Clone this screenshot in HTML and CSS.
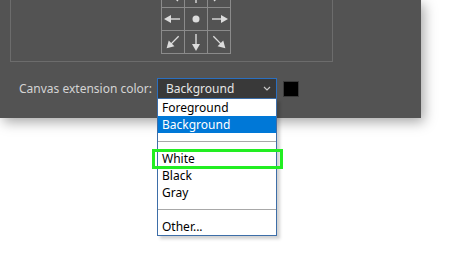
FILE: index.html
```
<!DOCTYPE html>
<html lang="en">
<head>
    <meta charset="UTF-8">
    <title>Canvas Size</title>
    <link rel="stylesheet" href="styles.css">
</head>
<body>
    <div class="dialog">
        <div class="anchor-box">
            <div class="anchor-grid">
                <div class="cell"><svg class="arrow r-135" viewBox="0 0 22 22"><path d="M4 11H14"/><polygon points="13,7 20,11 13,15"/></svg></div>
                <div class="cell"><svg class="arrow r-90" viewBox="0 0 22 22"><path d="M4 11H14"/><polygon points="13,7 20,11 13,15"/></svg></div>
                <div class="cell"><svg class="arrow r-45" viewBox="0 0 22 22"><path d="M4 11H14"/><polygon points="13,7 20,11 13,15"/></svg></div>
                <div class="cell"><svg class="arrow r180" viewBox="0 0 22 22"><path d="M4 11H14"/><polygon points="13,7 20,11 13,15"/></svg></div>
                <div class="cell"><svg class="arrow" viewBox="0 0 22 22"><circle cx="11" cy="11" r="3.5"/></svg></div>
                <div class="cell"><svg class="arrow" viewBox="0 0 22 22"><path d="M4 11H14"/><polygon points="13,7 20,11 13,15"/></svg></div>
                <div class="cell"><svg class="arrow r135" viewBox="0 0 22 22"><path d="M3 11H14"/><polygon points="13,7 20,11 13,15"/></svg></div>
                <div class="cell"><svg class="arrow r90" viewBox="0 0 22 22"><path d="M3 11H14"/><polygon points="13,7 20,11 13,15"/></svg></div>
                <div class="cell"><svg class="arrow r45" viewBox="0 0 22 22"><path d="M3 11H14"/><polygon points="13,7 20,11 13,15"/></svg></div>
            </div>
        </div>

        <div class="ext-row">
            <label class="ext-label">Canvas extension color:</label>
            <div class="select-wrap">
                <div class="select">
                    <span>Background</span>
                    <svg class="chevron" viewBox="0 0 8 5"><path d="M1 1L4 4L7 1"/></svg>
                </div>
                <ul class="options">
                    <li>Foreground</li>
                    <li class="selected">Background</li>
                    <li class="sep"></li>
                    <li>White</li>
                    <li>Black</li>
                    <li>Gray</li>
                    <li class="sep"></li>
                    <li>Other...</li>
                </ul>
                <div class="highlight"></div>
            </div>
            <div class="swatch"></div>
        </div>
    </div>
</body>
</html>
```

FILE: styles.css
```
html, body {
    height: 100%;
}
body {
    margin: 0;
    background-color: white;
    font-family: "Noto Sans", "Open Sans", sans-serif;
    font-size: 12px;
}
.dialog {
    width: 421px;
    height: 118px;
    background-color: #535353;
    box-shadow: 3px 4px 12px rgba(0, 0, 0, 0.35);
    padding-top: 1px;
    box-sizing: border-box;
}
.anchor-box {
    margin-left: 10px;
    margin-top: -20px;
    width: 323px;
    height: 81px;
    border: 1px solid #6c6c6c;
    box-sizing: border-box;
    display: flex;
    align-items: flex-end;
    padding-bottom: 7px;
}
.anchor-grid {
    margin-left: 150px;
    display: grid;
    grid-template-columns: repeat(3, 22px);
    grid-template-rows: repeat(3, 22px);
    gap: 1px;
    padding: 1px;
    background-color: #8b8b8b;
}
.cell {
    background-color: #535353;
}
.arrow {
    width: 22px;
    height: 22px;
    display: block;
}
.arrow path {
    stroke: #dcdcdc;
    stroke-width: 1.4;
    fill: none;
}
.arrow polygon,
.arrow circle {
    fill: #dcdcdc;
}
.r45 { transform: rotate(45deg); }
.r90 { transform: rotate(90deg); }
.r135 { transform: rotate(135deg); }
.r180 { transform: rotate(180deg); }
.r-45 { transform: rotate(-45deg); }
.r-90 { transform: rotate(-90deg); }
.r-135 { transform: rotate(-135deg); }

.ext-row {
    display: flex;
    align-items: center;
    margin-top: 16px;
    padding-left: 19px;
}
.ext-label {
    color: #d4d4d4;
    width: 138px;
    flex-shrink: 0;
    white-space: nowrap;
}
.select-wrap {
    position: relative;
    z-index: 2;
}
.select {
    width: 120px;
    height: 21px;
    box-sizing: border-box;
    background-color: #393939;
    border: 1px solid #2a6fc0;
    color: #e6e6e6;
    padding-left: 8px;
    display: flex;
    align-items: center;
    justify-content: space-between;
    padding-right: 5px;
}
.chevron {
    width: 8px;
    height: 5px;
}
.chevron path {
    stroke: #c8c8c8;
    stroke-width: 1.2;
    fill: none;
}
.swatch {
    width: 14px;
    height: 14px;
    margin-left: 6px;
    background-color: black;
    border: 1px solid #3a3a3a;
}
.options {
    position: absolute;
    top: 20px;
    left: 0;
    width: 120px;
    margin: 0;
    padding: 0;
    list-style: none;
    background-color: white;
    border: 1px solid #3d6ea8;
    box-sizing: border-box;
    box-shadow: 3px 3px 3px rgba(0, 0, 0, 0.18);
    color: black;
}
.options li {
    height: 17px;
    line-height: 17px;
    padding-left: 4px;
}
.options li.selected {
    background-color: #0078d7;
    color: white;
}
.options li.sep {
    position: relative;
}
.options li.sep::after {
    content: "";
    position: absolute;
    left: 0;
    right: 0;
    top: 8px;
    border-top: 1px solid #a8a8a8;
}
.highlight {
    position: absolute;
    top: 71px;
    left: -5px;
    width: 131px;
    height: 20px;
    box-sizing: border-box;
    border: 3px solid #22ee22;
}
```
